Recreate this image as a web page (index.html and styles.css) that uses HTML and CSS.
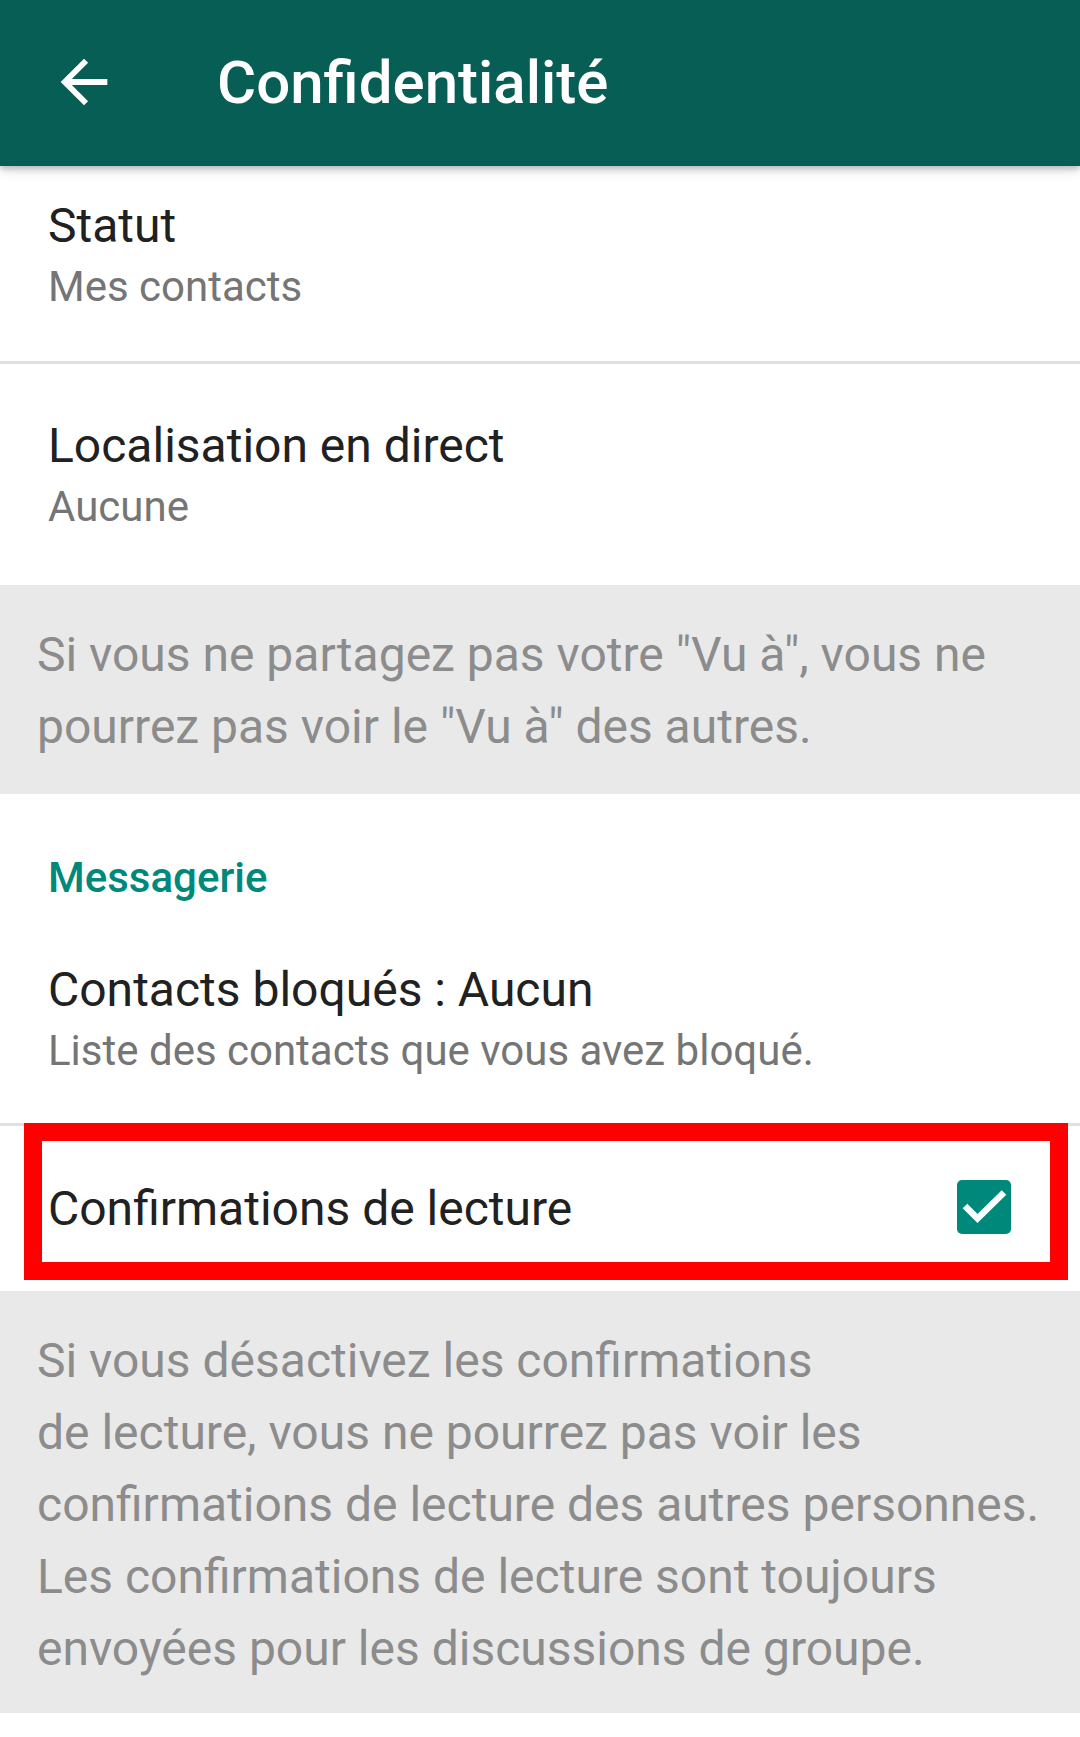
FILE: index.html
```html
<!DOCTYPE html>
<html lang="fr">
<head>
<meta charset="utf-8">
<title>Confidentialité</title>
<link rel="stylesheet" href="styles.css">
</head>
<body>
<div class="screen">
  <header class="toolbar">
    <span class="toolbar__back" aria-label="Retour">
      <svg viewBox="0 0 24 24" width="70" height="70"><path fill="#ffffff" d="M20 11H7.83l5.59-5.59L12 4l-8 8 8 8 1.41-1.41L7.83 13H20v-2z"/></svg>
    </span>
    <h1 class="toolbar__title">Confidentialité</h1>
  </header>

  <main class="prefs">
    <div class="item item--first item--divided">
      <div class="item__title">Statut</div>
      <div class="item__summary">Mes contacts</div>
    </div>
    <div class="item">
      <div class="item__title">Localisation en direct</div>
      <div class="item__summary">Aucune</div>
    </div>
    <div class="note">Si vous ne partagez pas votre "Vu à", vous ne<br>pourrez pas voir le "Vu à" des autres.</div>

    <div class="category">Messagerie</div>
    <div class="item item--divided item--tight">
      <div class="item__title">Contacts bloqués : Aucun</div>
      <div class="item__summary">Liste des contacts que vous avez bloqué.</div>
    </div>
    <div class="toggle">
      <div class="toggle__title">Confirmations de lecture</div>
      <span class="checkbox">
        <svg viewBox="0 0 54 54" width="54" height="54"><path d="M8 26 L20.5 38.5 L47 12.5" fill="none" stroke="#ffffff" stroke-width="6.5"/></svg>
      </span>
      <span class="highlight"></span>
    </div>
    <div class="note note--long">Si vous désactivez les confirmations<br>de lecture, vous ne pourrez pas voir les<br>confirmations de lecture des autres personnes.<br>Les confirmations de lecture sont toujours<br>envoyées pour les discussions de groupe.</div>
  </main>
</div>
</body>
</html>
```

FILE: styles.css
```css
* { box-sizing: border-box; }
html, body { margin: 0; padding: 0; background: #ffffff; }
body {
  font-family: Roboto, "Noto Sans", "Liberation Sans", sans-serif;
  width: 1080px;
  height: 1737px;
  overflow: hidden;
}
.screen { display: flex; flex-direction: column; width: 1080px; }

.toolbar {
  position: relative;
  z-index: 2;
  height: 166px;
  background: #075e54;
  display: flex;
  align-items: center;
  padding-left: 49px;
  box-shadow: 0 3px 6px rgba(0,0,0,0.22), 0 6px 12px rgba(0,0,0,0.08);
}
.toolbar__back { display: flex; width: 70px; height: 70px; margin-top: -2px; }
.toolbar__title {
  margin: 0 0 0 98px;
  font-size: 60px;
  font-weight: 500;
  color: #ffffff;
  line-height: 70px;
  letter-spacing: 0;
}

.prefs { display: flex; flex-direction: column; }

.item {
  padding: 54px 48px 45px 48px;
  display: flex;
  flex-direction: column;
}
.item--first { padding-top: 32px; padding-bottom: 41px; }
.item--divided { border-bottom: 3px solid #e0e0e0; }
.item--tight { padding-top: 59px; padding-bottom: 39px; }
.item__title {
  font-size: 48px;
  line-height: 56px;
  color: #212121;
}
.item__summary {
  font-size: 42px;
  line-height: 66px;
  color: #757575;
}

.note {
  background: #e9e9e9;
  color: #8c8c8c;
  font-size: 48px;
  line-height: 72px;
  padding: 34px 30px 31px 37px;
}
.note--long { padding-bottom: 28px; }

.category {
  padding: 59px 48px 0 48px;
  font-size: 42px;
  line-height: 50px;
  font-weight: 500;
  color: #00897b;
}

.toggle {
  position: relative;
  height: 165px;
  display: flex;
  align-items: center;
  justify-content: space-between;
  padding: 0 69px 0 48px;
}
.toggle__title {
  font-size: 48px;
  line-height: 56px;
  color: #212121;
}
.checkbox {
  display: flex;
  width: 54px;
  height: 54px;
  border-radius: 5px;
  background: #00897b;
  margin-top: -3px;
}
.highlight {
  position: absolute;
  top: -3px;
  left: 24px;
  right: 12px;
  bottom: 11px;
  border: 18px solid #ff0000;
  pointer-events: none;
}
```
